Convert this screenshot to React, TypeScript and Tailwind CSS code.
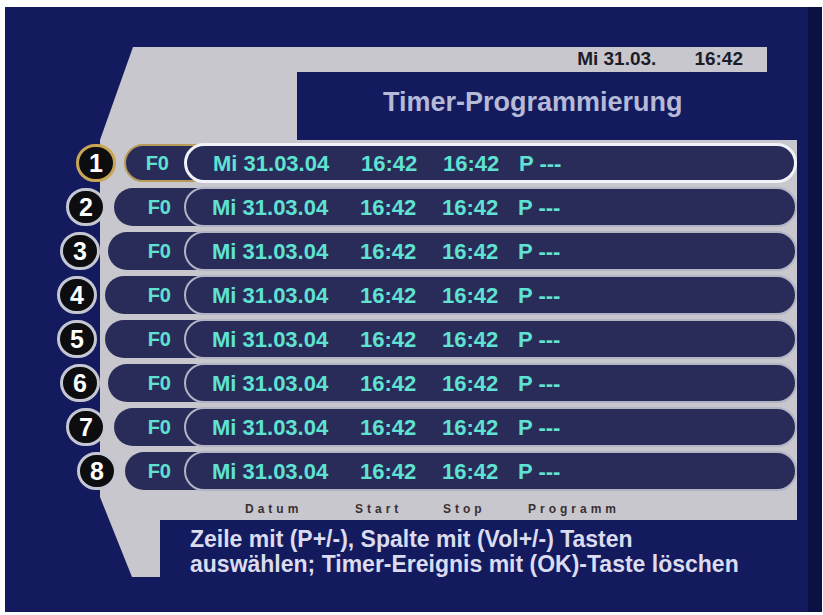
import React from 'react';

const rows = [
  { n: 1, ml: '-ml-[24px]' },
  { n: 2, ml: '-ml-[34px]' },
  { n: 3, ml: '-ml-[40px]' },
  { n: 4, ml: '-ml-[43px]' },
  { n: 5, ml: '-ml-[43px]' },
  { n: 6, ml: '-ml-[40px]' },
  { n: 7, ml: '-ml-[34px]' },
  { n: 8, ml: '-ml-[23px]' },
];

const TimerRow: React.FC<{ n: number; ml: string }> = ({ n, ml }) => {
  const active = n === 1;
  return (
    <div className="flex items-center h-[40px]">
      <div
        className={`${ml} relative z-20 w-[40px] h-[38px] shrink-0 rounded-full bg-[#0d0d0f] border-[3px] flex items-center justify-center text-white text-[25px] font-bold leading-none ${
          active ? 'border-[#c9a656]' : 'border-[#c4c6d2]'
        }`}
      >
        {n}
      </div>
      <div
        className={`ml-[8px] -mr-[20px] flex-1 h-[38px] rounded-l-full bg-[#292c58] flex items-center justify-end pr-[33px] text-[20px] font-bold text-[#5fe2d2] ${
          active ? 'border-2 border-[#b89a58]' : ''
        }`}
      >
        F0
      </div>
      <div
        className={`relative z-10 w-[613px] shrink-0 h-[40px] rounded-full bg-[#292c58] flex items-center pl-[26px] text-[22px] font-bold text-[#5fe2d2] ${
          active ? 'border-[3px] border-[#f2f2fa]' : 'border-2 border-[#b2b4c6]'
        }`}
      >
        <span className="w-[148px]">Mi 31.03.04</span>
        <span className="w-[82px]">16:42</span>
        <span className="w-[76px]">16:42</span>
        <span>P ---</span>
      </div>
    </div>
  );
};

export default function App() {
  return (
    <div
      className="w-[823px] h-[615px] bg-white pt-[7px] pl-[5px] pr-[1px] pb-[3px]"
      style={{ fontFamily: '"Liberation Sans", Arial, sans-serif' }}
    >
      <div className="w-full h-full bg-[#131b5e] flex">
        <div className="flex-1 pl-[95px] pt-[40px]">
          <div className="w-[697px] flex flex-col">
            {/* top: slanted gray corner, clock strip, title */}
            <div className="flex h-[93px]">
              <div className="w-[197px] h-full bg-[#c7c7cd] [clip-path:polygon(33px_0,100%_0,100%_100%,0_100%)]" />
              <div className="w-[500px] flex flex-col">
                <div className="w-[470px] h-[25px] bg-[#c7c7cd] flex items-center justify-end pr-[24px] gap-[38px] text-[19px] font-bold text-[#1c1c28]">
                  <span>Mi 31.03.</span>
                  <span>16:42</span>
                </div>
                <div className="flex-1 pl-[86px] pt-[10px] text-[27px] font-bold text-[#b6bad6]">
                  Timer-Programmierung
                </div>
              </div>
            </div>

            {/* timer rows */}
            <div className="bg-[#c7c7cd] pt-[3px] pb-[6px] flex flex-col gap-[4px]">
              {rows.map((r) => (
                <TimerRow key={r.n} n={r.n} ml={r.ml} />
              ))}
            </div>

            {/* column labels and help text */}
            <div className="flex h-[80px]">
              <div className="w-[60px] h-full bg-[#c7c7cd] [clip-path:polygon(0_0,100%_0,100%_100%,32px_100%)]" />
              <div className="flex-1 flex flex-col">
                <div className="h-[23px] bg-[#c7c7cd] flex items-center pl-[85px] text-[12px] font-bold tracking-[4px] text-[#3a2f30]">
                  <span className="w-[110px]">Datum</span>
                  <span className="w-[88px]">Start</span>
                  <span className="w-[85px]">Stop</span>
                  <span>Programm</span>
                </div>
                <div className="flex-1 pl-[30px] pt-[7px] text-[23px] leading-[25px] font-bold text-[#dcdcf0]">
                  <div>Zeile mit (P+/-), Spalte mit (Vol+/-) Tasten</div>
                  <div>auswählen; Timer-Ereignis mit (OK)-Taste löschen</div>
                </div>
              </div>
            </div>
          </div>
        </div>
        <div className="w-[14px] bg-[#0b1142]" />
      </div>
    </div>
  );
}
